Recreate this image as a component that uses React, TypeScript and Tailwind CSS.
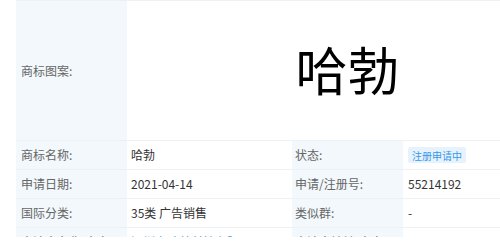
const font = { fontFamily: '"Noto Sans CJK SC", "Noto Sans", sans-serif' };

type Row = {
  label: string;
  value: React.ReactNode;
  label2: string;
  value2: React.ReactNode;
};

const rows: Row[] = [
  {
    label: '商标名称:',
    value: '哈勃',
    label2: '状态:',
    value2: (
      <span className="inline-flex h-[16px] items-center rounded-[2px] bg-[#e6f3ff] px-[4px] text-[10px] text-[#3b97e6]">
        注册申请中
      </span>
    ),
  },
  { label: '申请日期:', value: '2021-04-14', label2: '申请/注册号:', value2: '55214192' },
  { label: '国际分类:', value: '35类 广告销售', label2: '类似群:', value2: '-' },
  {
    label: '申请人名称(中文):',
    value: <span className="text-[#3b97e6]">深圳市哈勃科技有限公司</span>,
    label2: '申请人地址(中文):',
    value2: '',
  },
];

export default function App() {
  return (
    <div className="h-[247px] w-[500px] overflow-hidden bg-white" style={font}>
      <div className="ml-4 h-[237px] w-[552px] overflow-hidden border-t border-[#eef1f4]">
        <div className="grid grid-cols-[111px_165px_111px_165px] text-[12px]">
          {/* 商标图案 */}
          <div className="flex h-[140px] items-center border-b border-[#eef1f4] bg-[#f2f8fc] pl-[5px] text-[#666]">
            商标图案:
          </div>
          <div className="col-span-3 flex h-[140px] items-center justify-center border-b border-[#eef1f4] pb-[4px]">
            <span className="text-[52px] leading-none text-black">哈勃</span>
          </div>

          {rows.map((r) => (
            <div key={r.label} className="contents">
              <div className="flex h-[29px] items-center border-b border-[#eef1f4] bg-[#f2f8fc] pl-[5px] text-[#666]">
                {r.label}
              </div>
              <div className="flex h-[29px] items-center border-b border-[#eef1f4] pl-[4px] text-[#333]">
                {r.value}
              </div>
              <div className="flex h-[29px] items-center border-b border-[#eef1f4] bg-[#f2f8fc] pl-[3px] text-[#666]">
                {r.label2}
              </div>
              <div className="flex h-[29px] items-center border-b border-[#eef1f4] pl-[5px] text-[#333]">
                {r.value2}
              </div>
            </div>
          ))}
        </div>
      </div>
    </div>
  );
}
